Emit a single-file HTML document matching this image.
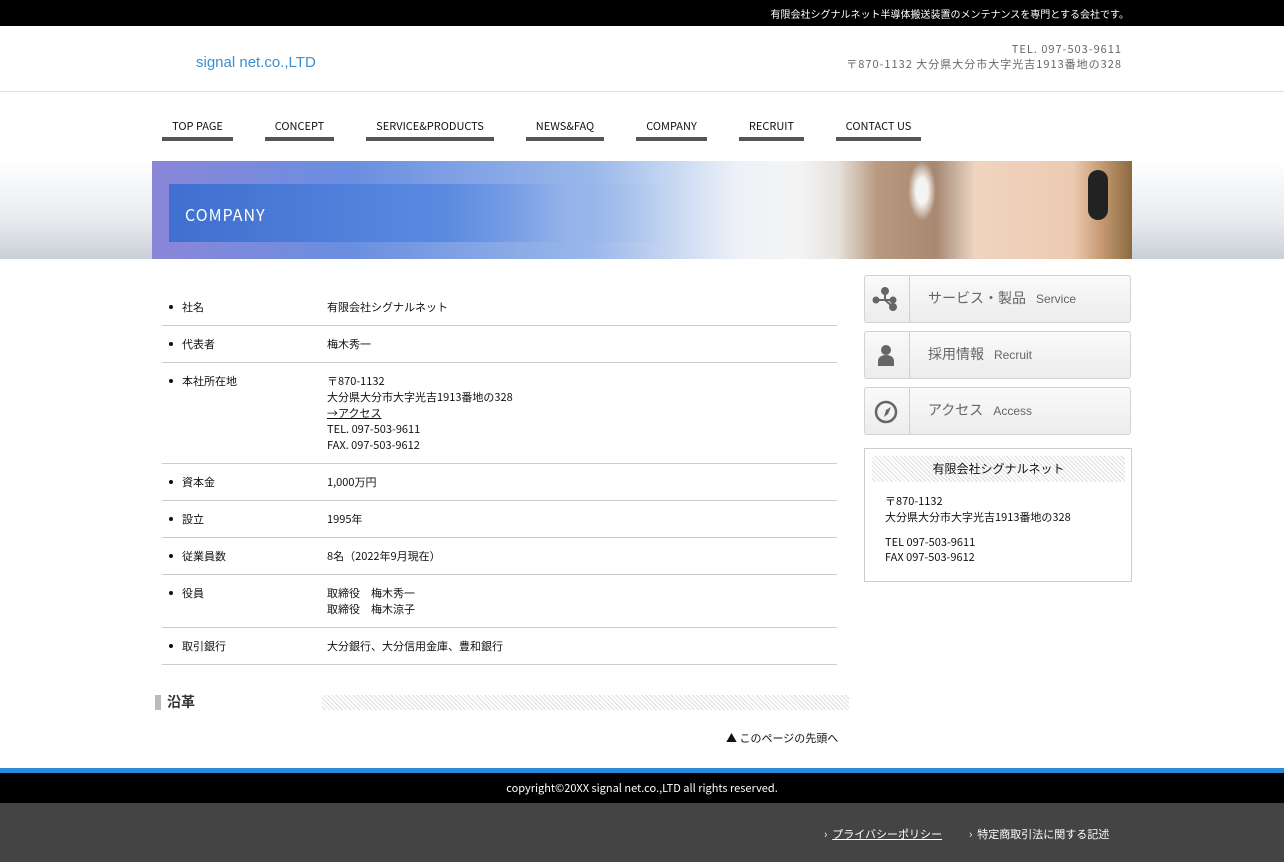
<!DOCTYPE html>
<html><head><meta charset="utf-8"><style>
*{margin:0;padding:0;box-sizing:border-box}
body{width:1284px;height:862px;overflow:hidden;background:#fff;font-family:"Noto Sans CJK JP","Liberation Sans",sans-serif;color:#111;font-size:12px;position:relative}
.abs{position:absolute}
.top{left:0;top:0;width:1284px;height:26px;background:#000;color:#fff;font-size:10px;text-align:right;padding-right:155px;line-height:28px}
.hdr{left:0;top:26px;width:1284px;height:66px;border-bottom:1px solid #ddd}
.nav a{position:absolute;top:117px;height:24px;border-bottom:4px solid #555;font-size:11px;color:#111;text-decoration:none;text-align:center;line-height:18px}
.band{left:0;top:161px;width:1284px;height:98px;background:linear-gradient(#fff,#e8ebee 60%,#c9d0d6)}
.row{position:absolute;left:162px;width:675px;border-bottom:1px solid #ccc;line-height:16px;font-size:11px}
.row .l{position:absolute;left:20px}
.row .l:before{content:"";position:absolute;left:-13px;top:6px;width:4px;height:4px;border-radius:2px;background:#111}
.row .v{position:absolute;left:165px}
.btn{position:absolute;left:864px;width:267px;height:48px;border:1px solid #d3d3d3;border-radius:3px;background:linear-gradient(#fafafa,#ececec)}
.btn .ic{position:absolute;left:0;top:0;width:45px;height:46px;border-right:1px solid #d0d0d0}
.btn .t{position:absolute;left:63px;top:12px;font-size:14px;color:#666}
.btn .t small{font-family:"Liberation Sans",sans-serif;font-size:12px;margin-left:10px}
.hatch{background:repeating-linear-gradient(45deg,#fff 0 2px,#ddd 2px 3px)}
</style></head><body>
<div class="abs top">有限会社シグナルネット半導体搬送装置のメンテナンスを専門とする会社です。</div>
<div class="abs hdr"></div>
<div class="abs" style="left:196px;top:54px;font-size:15px;color:#3b8fd0;font-family:'Liberation Sans',sans-serif">signal net.co.,LTD</div>
<div class="abs" style="right:162px;top:42px;font-size:11px;color:#666;text-align:right;line-height:15px;letter-spacing:1px">TEL. 097-503-9611<br>〒870-1132 大分県大分市大字光吉1913番地の328</div>
<div class="nav">
<a style="left:162px;width:71px">TOP PAGE</a>
<a style="left:265px;width:69px">CONCEPT</a>
<a style="left:366px;width:128px">SERVICE&amp;PRODUCTS</a>
<a style="left:526px;width:78px">NEWS&amp;FAQ</a>
<a style="left:636px;width:71px">COMPANY</a>
<a style="left:739px;width:65px">RECRUIT</a>
<a style="left:836px;width:85px">CONTACT US</a>
</div>
<div class="abs band"></div>
<div class="abs" style="left:152px;top:161px;width:980px;height:98px;background:linear-gradient(90deg,#8a86d8 0%,#6a8ee0 20%,#9ab8ea 45%,#eef2f8 60%,#f4f4f4 66%,#e6e2dc 70%,#b89a80 74%,#a88870 80%,#c8b0a0 82%,#f0d4c0 84%,#eccab0 94%,#c49870 97%,#8a6a40 100%)"></div>
<div class="abs" style="left:908px;top:161px;width:28px;height:60px;background:radial-gradient(ellipse,#f4f4f4 30%,rgba(240,240,240,0) 70%)"></div>
<div class="abs" style="left:1088px;top:170px;width:20px;height:50px;border-radius:10px;background:#222"></div>
<div class="abs" style="left:169px;top:184px;width:500px;height:58px;background:linear-gradient(90deg,#3f6fd0,#5a8ae0 55%,rgba(150,180,235,.5) 80%,rgba(200,215,240,0))"></div>
<div class="abs" style="left:185px;top:202px;font-size:16px;color:#fff;letter-spacing:1px">COMPANY</div>

<div class="row" style="top:289px;height:37px"><span class="l" style="top:10px">社名</span><span class="v" style="top:10px">有限会社シグナルネット</span></div>
<div class="row" style="top:326px;height:37px"><span class="l" style="top:10px">代表者</span><span class="v" style="top:10px">梅木秀一</span></div>
<div class="row" style="top:363px;height:101px"><span class="l" style="top:10px">本社所在地</span><span class="v" style="top:10px">〒870-1132<br>大分県大分市大字光吉1913番地の328<br><u>→アクセス</u><br>TEL. 097-503-9611<br>FAX. 097-503-9612</span></div>
<div class="row" style="top:464px;height:37px"><span class="l" style="top:10px">資本金</span><span class="v" style="top:10px">1,000万円</span></div>
<div class="row" style="top:501px;height:37px"><span class="l" style="top:10px">設立</span><span class="v" style="top:10px">1995年</span></div>
<div class="row" style="top:538px;height:37px"><span class="l" style="top:10px">従業員数</span><span class="v" style="top:10px">8名（2022年9月現在）</span></div>
<div class="row" style="top:575px;height:53px"><span class="l" style="top:10px">役員</span><span class="v" style="top:10px">取締役　梅木秀一<br>取締役　梅木涼子</span></div>
<div class="row" style="top:628px;height:37px"><span class="l" style="top:10px">取引銀行</span><span class="v" style="top:10px">大分銀行、大分信用金庫、豊和銀行</span></div>

<div class="abs" style="left:155px;top:695px;width:6px;height:15px;background:#bbb"></div>
<div class="abs" style="left:167px;top:692px;font-size:14px;font-weight:bold;color:#333">沿革</div>
<div class="abs hatch" style="left:322px;top:695px;width:527px;height:15px"></div>
<div class="abs" style="left:726px;top:730px;font-size:11px">▲ このページの先頭へ</div>

<div class="btn" style="top:275px"><div class="ic"><svg width="45" height="46"><g fill="#666" stroke="#666" stroke-width="2"><line x1="20" y1="16" x2="20" y2="24"/><line x1="12" y1="24" x2="28" y2="24"/><line x1="20" y1="24" x2="28" y2="31"/><circle cx="20" cy="15" r="3"/><circle cx="11" cy="24" r="2.5"/><circle cx="28" cy="24" r="2.5"/><circle cx="28" cy="31" r="3"/></g></svg></div><div class="t">サービス・製品<small>Service</small></div></div>
<div class="btn" style="top:331px"><div class="ic"><svg width="45" height="46"><g fill="#666"><circle cx="21" cy="18" r="5"/><path d="M13 34v-5c0-4 4-6 8-6s8 2 8 6v5z"/></g></svg></div><div class="t">採用情報<small>Recruit</small></div></div>
<div class="btn" style="top:387px"><div class="ic"><svg width="45" height="46"><circle cx="21" cy="24" r="10" fill="none" stroke="#666" stroke-width="2.5"/><path d="M26 19l-3 7-4 3 2-7z" fill="#666"/></svg></div><div class="t">アクセス<small>Access</small></div></div>

<div class="abs" style="left:864px;top:448px;width:268px;height:134px;border:1px solid #ccc"></div>
<div class="abs hatch" style="left:872px;top:456px;width:253px;height:26px;text-align:center;line-height:26px;font-size:12px">有限会社シグナルネット</div>
<div class="abs" style="left:885px;top:493px;font-size:11px;line-height:16px">〒870-1132<br>大分県大分市大字光吉1913番地の328</div>
<div class="abs" style="left:885px;top:535px;font-size:11px;line-height:15px">TEL 097-503-9611<br>FAX 097-503-9612</div>

<div class="abs" style="left:0;top:768px;width:1284px;height:5px;background:#2b8ad8"></div>
<div class="abs" style="left:0;top:773px;width:1284px;height:30px;background:#000;color:#fff;font-size:11px;text-align:center;line-height:30px">copyright©20XX signal net.co.,LTD all rights reserved.</div>
<div class="abs" style="left:0;top:803px;width:1284px;height:59px;background:#444"></div>
<div class="abs" style="left:824px;top:826px;font-size:11px;color:#fff">›&nbsp; <u>プライバシーポリシー</u></div>
<div class="abs" style="left:969px;top:826px;font-size:11px;color:#fff">›&nbsp; 特定商取引法に関する記述</div>
</body></html>
